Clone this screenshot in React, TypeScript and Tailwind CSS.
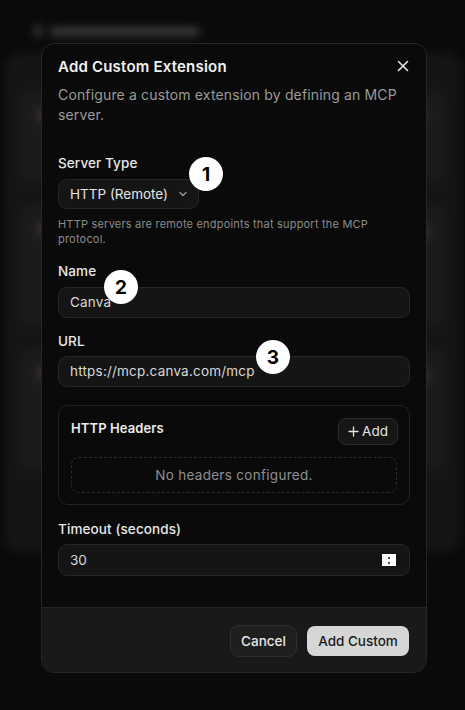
import React from "react";

function Badge({ n, className }: { n: string; className: string }) {
  return (
    <div
      className={
        "absolute w-[34px] h-[34px] rounded-full bg-white text-black flex items-center justify-center text-[19px] font-bold leading-none " +
        className
      }
    >
      {n}
    </div>
  );
}

function Label({ children }: { children: React.ReactNode }) {
  return <div className="text-[13.5px] leading-[20px] font-medium text-[#e8e8e8] tracking-[0.1px]">{children}</div>;
}

function Input({ value }: { value: string }) {
  return (
    <div className="h-[31px] rounded-[9px] border border-[#262626] bg-[#151515] px-[11px] flex items-center text-[13.5px] text-[#d8d8d8] tracking-[0.2px]">
      {value}
    </div>
  );
}

export default function App() {
  return (
    <div
      className="relative w-[465px] h-[710px] overflow-hidden bg-[#0a0a0a]"
      style={{ fontFamily: "Inter, 'Noto Sans', sans-serif" }}
    >
      {/* blurred background page */}
      <div className="blur-[4px] pt-[22px] px-[4px]">
        <div className="flex items-center gap-2 pl-[30px] h-[18px]">
          <div className="w-[8px] h-[12px] rounded-sm bg-[#3a3a3a]" />
          <div className="w-[150px] h-[9px] rounded bg-[#3a3a3a]" />
        </div>
        <div className="mt-[12px] h-[500px] rounded-2xl bg-[#151515] px-[16px] pt-[40px] flex flex-col gap-[24px]">
          <div className="h-[90px] rounded-xl bg-[#1b1b1b] flex items-start justify-between p-[16px]">
            <div className="w-[14px] h-[14px] rounded-full bg-[#3a2f33]" />
            <div className="w-[40px] h-[16px] rounded-full bg-[#2a2427]" />
          </div>
          <div className="h-[120px] rounded-xl bg-[#1b1b1b] flex items-start justify-between p-[16px]">
            <div className="w-[14px] h-[14px] rounded-full bg-[#3a2f33]" />
            <div className="w-[40px] h-[20px] rounded-full bg-[#3d3035]" />
          </div>
          <div className="h-[120px] rounded-xl bg-[#1b1b1b] flex items-start justify-between p-[16px]">
            <div className="w-[14px] h-[14px] rounded-full bg-[#3a2f33]" />
            <div className="w-[40px] h-[20px] rounded-full bg-[#3d3035]" />
          </div>
        </div>
      </div>

      {/* dialog overlay */}
      <div className="absolute left-[41px] top-[43px] w-[386px] rounded-[13px] border border-[#262626] bg-[#0a0a0a] overflow-hidden">
        <div className="relative px-4 pt-[12px] pb-[31px]">
          <div className="flex items-center justify-between">
            <div className="text-[15px] leading-[22px] font-semibold text-[#f2f2f2] tracking-[0.2px]">Add Custom Extension</div>
            <svg width="12" height="12" viewBox="0 0 12 12" className="mr-[1px] -mt-[2px]">
              <path d="M1.5 1.5 L10.5 10.5 M10.5 1.5 L1.5 10.5" stroke="#e5e5e5" strokeWidth="1.6" strokeLinecap="round" />
            </svg>
          </div>
          <div className="mt-[7px] text-[14px] leading-[20px] text-[#9a9a9a] tracking-[0.15px]">
            Configure a custom extension by defining an MCP server.
          </div>

          <div className="mt-[28px]">
            <Label>Server Type</Label>
            <div className="mt-[6px] h-[30px] w-[141px] rounded-[9px] border border-[#262626] bg-[#151515] pl-[11px] pr-[10px] flex items-center justify-between text-[13.5px] text-[#e5e5e5]">
              <span>HTTP (Remote)</span>
              <svg width="10" height="10" viewBox="0 0 10 10">
                <path d="M2 3.5 L5 6.5 L8 3.5" stroke="#a0a0a0" strokeWidth="1.2" fill="none" strokeLinecap="round" strokeLinejoin="round" />
              </svg>
            </div>
            <div className="mt-[8px] text-[11px] leading-[15px] text-[#8a8a8a] pr-[10px] tracking-[0.2px]">
              HTTP servers are remote endpoints that support the MCP protocol.
            </div>
          </div>

          <div className="mt-[14px] flex flex-col gap-[6px]">
            <Label>Name</Label>
            <Input value="Canva" />
          </div>

          <div className="mt-[13px] flex flex-col gap-[5px]">
            <Label>URL</Label>
            <Input value="https://mcp.canva.com/mcp" />
          </div>

          <div className="mt-[18px] rounded-[10px] border border-[#222222] px-[12px] pt-[12px] pb-[11px]">
            <div className="flex items-center justify-between">
              <div className="text-[13px] font-semibold text-[#ececec] -mt-[6px] tracking-[0.1px]">HTTP Headers</div>
              <div className="h-[27px] w-[60px] rounded-[8px] border border-[#2c2c2c] bg-[#161616] flex items-center justify-center gap-[3px] text-[13.5px] text-[#e5e5e5] mr-[-1px]">
                <svg width="11" height="11" viewBox="0 0 11 11">
                  <path d="M5.5 1 V10 M1 5.5 H10" stroke="#e5e5e5" strokeWidth="1.3" strokeLinecap="round" />
                </svg>
                <span>Add</span>
              </div>
            </div>
            <div className="mt-[12px] h-[36px] rounded-[8px] border border-dashed border-[#2c2c2c] flex items-center justify-center text-[13.5px] text-[#8f8f8f] tracking-[0.3px]">
              No headers configured.
            </div>
          </div>

          <div className="mt-[14px] flex flex-col gap-[5px]">
            <Label>Timeout (seconds)</Label>
            <div className="h-[32px] rounded-[9px] border border-[#262626] bg-[#151515] pl-[11px] pr-[13px] flex items-center justify-between text-[13.5px] text-[#d8d8d8]">
              <span>30</span>
              <div className="w-[14px] h-[12px] bg-white flex flex-col items-center justify-center gap-[3px]">
                <div className="w-[2px] h-[2px] bg-[#555]" />
                <div className="w-[2px] h-[2px] bg-[#555]" />
              </div>
            </div>
          </div>

          <Badge n="1" className="left-[147px] top-[113px]" />
          <Badge n="2" className="left-[62px] top-[226px]" />
          <Badge n="3" className="left-[214px] top-[296px]" />
        </div>

        <div className="border-t border-[#242424] bg-[#191919] px-[17px] pt-[17px] pb-[15px] flex justify-end gap-[10px]">
          <div className="h-[32px] w-[67px] rounded-[9px] border border-[#2e2e2e] bg-[#1f1f1f] flex items-center justify-center text-[13.5px] font-medium text-[#e8e8e8]">
            Cancel
          </div>
          <div className="h-[30px] mt-[1px] w-[102px] rounded-[8px] bg-[#d6d6d6] flex items-center justify-center text-[13.5px] font-medium text-[#1a1a1a]">
            Add Custom
          </div>
        </div>
      </div>
    </div>
  );
}
